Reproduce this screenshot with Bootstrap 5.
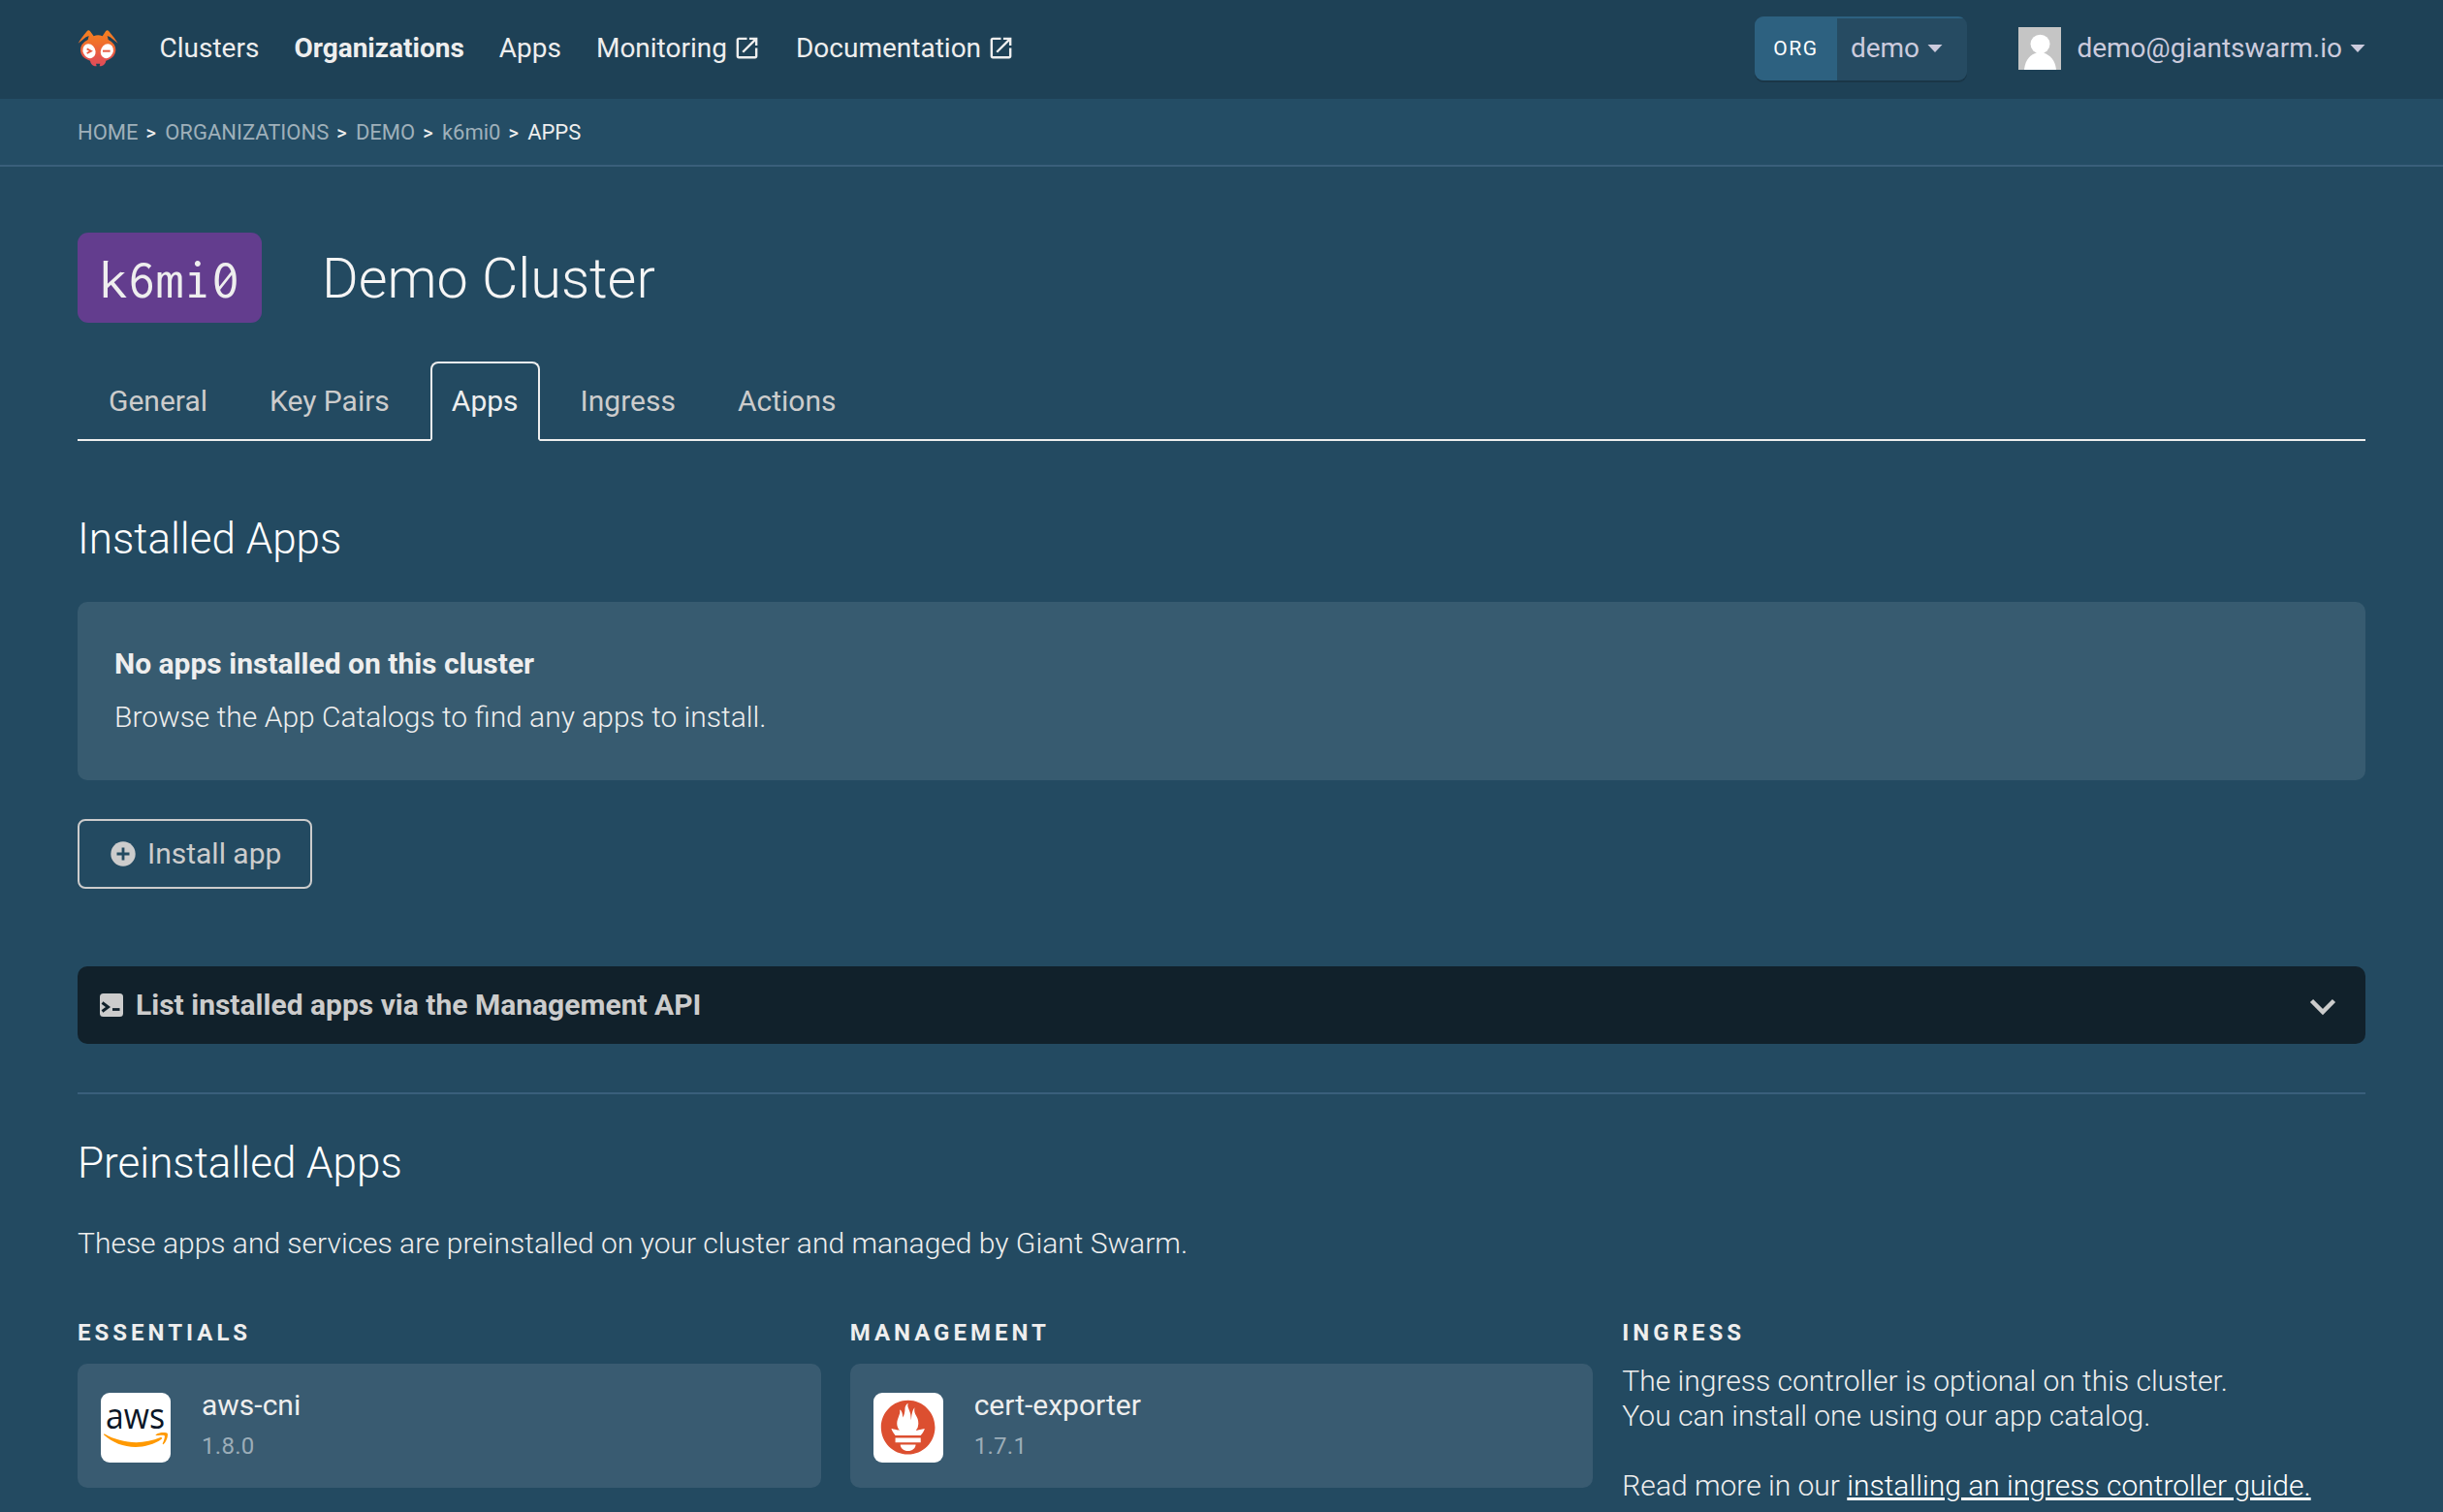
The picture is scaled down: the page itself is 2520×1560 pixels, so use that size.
<!DOCTYPE html>
<html lang="en">
<head>
<meta charset="utf-8">
<meta name="viewport" content="width=device-width, initial-scale=1">
<title>Demo Cluster | Apps</title>
<link href="https://cdn.jsdelivr.net/npm/bootstrap@5.3.0/dist/css/bootstrap.min.css" rel="stylesheet">
<style>
  body { background: #234a61; color: #eee; font-family: Roboto, "Liberation Sans", sans-serif; font-size: 30px; font-weight: 300; line-height: 36px; overflow: hidden; height: 1560px; }
  a { color: inherit; text-decoration: none; }
  svg { display: block; flex: none; }
  .gutter { padding-left: 80px; padding-right: 80px; }
  .topbar { height: 102px; padding-top: 0; padding-bottom: 3px; background: #1e4156; font-size: 28px; font-weight: 400; }
  .topbar .navbar-nav { gap: 36px; margin-left: 40.5px; }
  .topbar .navbar-nav .nav-link { padding: 0; color: #eee; line-height: 34px; }
  .topbar .navbar-nav .nav-link.active { color: #eee; font-weight: 700; }
  .topbar .nav-link svg { margin-left: 6px; }
  .org-picker { width: 219px; height: 66px; border-radius: 9px; overflow: hidden; background: #264b62; color: #cccbdd; }
  .org-wrap { border-radius: 9px; box-shadow: 0 2px 0 #1a3647; margin-right: 53px; }
  .org-label { width: 85px; background: #2d6180; color: #fff; font-size: 21px; letter-spacing: 1.5px; }
  .org-name { border-top: 2px solid #2d6180; padding-left: 14px; padding-bottom: 1px; }
  .user-menu { color: #cccbdd; }
  .user-name { margin: 0 8px 0 16.500px; }
  .crumbs { height: 70px; padding-top: 2px; background: #244d65; border-bottom: 2px solid #3a5f7b; font-size: 22px; font-weight: 400; line-height: 26px; color: #9fb0ba; --bs-breadcrumb-divider: '>'; }
  .crumbs .breadcrumb { margin: 0; font-size: 22px; }
  .crumbs .breadcrumb-item.active { color: #eee; }
  .crumbs .breadcrumb-item + .breadcrumb-item { padding-left: 0; }
  .crumbs .breadcrumb-item + .breadcrumb-item::before { color: #eee; font-size: 20px; font-weight: 500; width: 27.700px; padding: 0 0 0 8px; }
  main { padding-top: 68px; }
  .cluster-id { width: 190px; height: 93px; border-radius: 11px; background: #633d8e; font-family: Inconsolata, "Liberation Mono", monospace; font-size: 57.6px; font-weight: 400; padding-top: 3px; }
  h1 { font-size: 57.6px; font-weight: 300; line-height: 68px; margin: 2px 0 0 62px; color: #f5f5f5; }
  h2 { font-size: 44px; font-weight: 300; line-height: 52px; margin: 0; color: #fff; }
  .tabline { margin-top: 40px; height: 82px; border-bottom: 2px solid #eee; padding-left: 10px; gap: 20px; }
  .tabline .nav-link { height: 82px; padding: 0 20px; border-width: 2px; border-radius: 8px 8px 0 0; color: #ccc; font-weight: 400; display: flex; align-items: center; margin-bottom: -2px; }
  .tabline .nav-link.active { background: #234a61; color: #eee; border-color: #eee #eee #234a61; }
  .sect-installed { margin-top: 75px; }
  .notice { margin-top: 39px; height: 184px; border: 0; border-radius: 10px; background: #375b70; color: #eee; padding: 46px 38px 0; gap: 19px; }
  .install-btn { margin-top: 40px; width: 242px; height: 72px; border: 2px solid #ccc; border-radius: 8px; color: #ccc; font-size: 30px; line-height: 36px; padding: 0 0 0 32px; gap: 12px; }
  .cli-bar { margin-top: 80px; height: 80px; border-radius: 10px; background: #11212b; color: #ccc; padding: 0 30px 0 23px; font-weight: 700; gap: 13px; }
  .cli-bar .chevron { margin: 3px 0 0 auto; }
  .rule { margin: 50px 0 45px; border-top: 2px solid #3a5f7b; opacity: 1; }
  .intro { margin: 39px 0 59px; }
  .app-row { --bs-gutter-x: 30px; }
  .label-caps { font-size: 24px; font-weight: 700; line-height: 30px; letter-spacing: 4px; margin: 0 0 17px; }
  .app-card { height: 128px; border: 0; border-radius: 10px; background: #395b71; color: #eee; padding: 0 24px; gap: 32px; flex-direction: row; }
  .app-logo { width: 72px; height: 72px; border-radius: 9px; background: #fff; margin-top: 30px; overflow: visible; }
  .app-name { margin-top: 25px; font-weight: 400; }
  .app-version { margin-top: 9px; font-size: 24px; line-height: 30px; font-weight: 400; color: #9cadb8; letter-spacing: .3px; }
  .guide { color: #fff; text-decoration: underline; }
</style>
</head>
<body>
<nav class="navbar navbar-expand topbar gutter d-flex align-items-center">
  <a href="#" aria-label="Home"><svg width="44" height="38" viewBox="63 92 132 114">
    <defs><linearGradient id="ant" x1="0" y1="0" x2="0" y2="1"><stop offset="0" stop-color="#f58120"/><stop offset=".35" stop-color="#f0702c"/><stop offset=".75" stop-color="#e5544b"/><stop offset="1" stop-color="#e04d5a"/></linearGradient></defs>
    <path fill="url(#ant)" d="M65 133 Q74 117 92 96 Q97 90 102 96 L113 111 Q126 105 140 111 L150 96 Q155 90 160 96 Q178 117 188 133 Q176 124 164 114 L155 110 L158 122 Q181 133 181 155 Q179 176 158 184 L151 187 Q149 200 136 204 L131 204 L133 196 H120 L122 204 L116 204 Q104 200 102 187 L95 184 Q73 176 72 155 Q72 133 95 122 L98 110 L89 114 Q77 124 65 133Z"/>
    <ellipse cx="99" cy="157" rx="19" ry="23" fill="#fff" transform="rotate(-25 99 157)"/><ellipse cx="154" cy="157" rx="19" ry="23" fill="#fff" transform="rotate(25 154 157)"/>
    <path d="M92 150 L105 157 L92 164" fill="none" stroke="#e65a42" stroke-width="5.5"/><path d="M141 157H164" stroke="#e65a42" stroke-width="6"/>
  </svg></a>
  <ul class="navbar-nav">
    <li class="nav-item"><a class="nav-link" href="#">Clusters</a></li>
    <li class="nav-item"><a class="nav-link active" href="#">Organizations</a></li>
    <li class="nav-item"><a class="nav-link" href="#">Apps</a></li>
    <li class="nav-item"><a class="nav-link d-flex align-items-center" href="#">Monitoring<svg width="29" height="29" viewBox="0 0 24 24" fill="currentColor"><path d="M19 19H5V5h7V3H5c-1.11 0-2 .9-2 2v14c0 1.1.89 2 2 2h14c1.1 0 2-.9 2-2v-7h-2v7zM14 3v2h3.59l-9.83 9.83 1.41 1.41L19 6.41V10h2V3h-7z"/></svg></a></li>
    <li class="nav-item"><a class="nav-link d-flex align-items-center" href="#">Documentation<svg width="29" height="29" viewBox="0 0 24 24" fill="currentColor"><path d="M19 19H5V5h7V3H5c-1.11 0-2 .9-2 2v14c0 1.1.89 2 2 2h14c1.1 0 2-.9 2-2v-7h-2v7zM14 3v2h3.59l-9.83 9.83 1.41 1.41L19 6.41V10h2V3h-7z"/></svg></a></li>
  </ul>
  <div class="d-flex align-items-center ms-auto">
    <div class="org-wrap"><div class="org-picker d-flex">
      <span class="org-label d-flex align-items-center justify-content-center">ORG</span>
      <a class="org-name d-flex align-items-center flex-grow-1" href="#">demo<svg class="ms-2" width="16" height="8" viewBox="0 0 16 8" fill="currentColor"><path d="M.5 0h15L8 8z"/></svg></a>
    </div></div>
    <a class="user-menu d-flex align-items-center" href="#">
      <svg width="44" height="44" viewBox="0 0 44 44"><path fill="#c5c5c5" d="M0 0h44v44H0z"/><ellipse cx="22.5" cy="17.5" rx="10" ry="9.8" fill="#fff"/><path fill="#fff" d="M6 44C7 33 13 28 19 26.500H26C33 29 38 34 39 44Z"/></svg>
      <span class="user-name">demo@giantswarm.io</span><svg width="16" height="8" viewBox="0 0 16 8" fill="currentColor"><path d="M.5 0h15L8 8z"/></svg>
    </a>
  </div>
</nav>
<nav class="crumbs gutter d-flex align-items-center" aria-label="breadcrumb">
  <ol class="breadcrumb">
    <li class="breadcrumb-item"><a href="#">HOME</a></li>
    <li class="breadcrumb-item"><a href="#">ORGANIZATIONS</a></li>
    <li class="breadcrumb-item"><a href="#">DEMO</a></li>
    <li class="breadcrumb-item"><a href="#">k6mi0</a></li>
    <li class="breadcrumb-item active" aria-current="page">APPS</li>
  </ol>
</nav>
<main class="gutter">
  <header class="d-flex align-items-center">
    <span class="cluster-id d-flex align-items-center justify-content-center">k6mi0</span>
    <h1>Demo Cluster</h1>
  </header>
  <ul class="nav nav-tabs tabline">
    <li class="nav-item"><a class="nav-link" href="#">General</a></li>
    <li class="nav-item"><a class="nav-link" href="#">Key Pairs</a></li>
    <li class="nav-item"><a class="nav-link active" href="#">Apps</a></li>
    <li class="nav-item"><a class="nav-link" href="#">Ingress</a></li>
    <li class="nav-item"><a class="nav-link" href="#">Actions</a></li>
  </ul>
  <h2 class="sect-installed">Installed Apps</h2>
  <div class="card notice">
    <div class="fw-bold">No apps installed on this cluster</div>
    <div>Browse the App Catalogs to find any apps to install.</div>
  </div>
  <button type="button" class="btn install-btn d-flex align-items-center"><svg width="26" height="26" viewBox="0 0 26 26"><circle cx="13" cy="13" r="12.700" fill="#ccc"/><path d="M13 6.500v13M6.500 13h13" stroke="#234a61" stroke-width="2.800"/></svg><span>Install app</span></button>
  <div class="cli-bar d-flex align-items-center">
    <svg width="24" height="24" viewBox="0 0 24 24"><rect width="24" height="24" rx="3.500" fill="#ccc"/><path d="M2.500 9.500l6 4.500-6 4.500" fill="none" stroke="#11212b" stroke-width="3"/><path d="M13 16.500h7.500" stroke="#11212b" stroke-width="2.800"/></svg>
    <span>List installed apps via the Management API</span>
    <svg class="chevron" width="28" height="18" viewBox="0 0 28 18"><path d="M2.500 2.500L14 14 25.500 2.500" fill="none" stroke="#ccc" stroke-width="4.500"/></svg>
  </div>
  <hr class="rule">
  <h2>Preinstalled Apps</h2>
  <p class="intro">These apps and services are preinstalled on your cluster and managed by Giant Swarm.</p>
  <div class="row app-row">
    <section class="col-4">
      <h3 class="label-caps">ESSENTIALS</h3>
      <div class="card app-card">
        <svg class="app-logo" viewBox="0 0 72 72"><text x="5" y="36.500" font-family="Open Sans, Noto Sans, sans-serif" font-weight="500" font-size="37" textLength="61" lengthAdjust="spacingAndGlyphs" fill="#0b1626">aws</text><path fill="#f90" transform="translate(3 3.200) scale(2.750)" d="M21.698 16.207c-2.626 1.940-6.442 2.969-9.722 2.969-4.598 0-8.740-1.700-11.870-4.526-.247-.223-.024-.527.272-.351 3.384 1.963 7.559 3.153 11.877 3.153 2.914 0 6.114-.607 9.060-1.852.439-.2.814.287.383.607zM22.792 14.961c-.336-.43-2.220-.207-3.074-.103-.255.032-.295-.192-.063-.36 1.500-1.053 3.967-.75 4.254-.399.287.36-.08 2.826-1.485 4.007-.215.184-.423.088-.327-.151.320-.790 1.030-2.570.695-2.994z"/></svg>
        <div><div class="app-name">aws-cni</div><div class="app-version">1.8.0</div></div>
      </div>
    </section>
    <section class="col-4">
      <h3 class="label-caps">MANAGEMENT</h3>
      <div class="card app-card">
        <svg class="app-logo" viewBox="0 0 72 72"><path fill="#dc4f30" transform="translate(7.800 7.800) scale(2.320)" d="M12 0C5.373 0 0 5.372 0 12c0 6.627 5.373 12 12 12s12-5.373 12-12c0-6.628-5.373-12-12-12zm0 22.460c-1.885 0-3.414-1.260-3.414-2.814h6.828c0 1.553-1.528 2.813-3.414 2.813zm5.640-3.745H6.360v-2.046h11.280v2.046zm-.04-3.098H6.391c-.037-.043-.075-.086-.111-.13-1.155-1.401-1.427-2.133-1.690-2.879-.005-.025 1.400.287 2.395.511 0 0 .513.119 1.262.255-.72-.843-1.147-1.915-1.147-3.010 0-2.406 1.845-4.508 1.180-6.207.648.053 1.340 1.367 1.387 3.422.689-.951.977-2.690.977-3.755 0-1.103.727-2.385 1.454-2.429-.648 1.069.168 1.984.894 4.256.272.854.237 2.290.447 3.201.07-1.892.395-4.652 1.595-5.605-.529 1.200.079 2.702.494 3.424.671 1.164 1.078 2.047 1.078 3.716a4.642 4.642 0 01-1.110 2.996c.792-.149 1.340-.283 1.340-.283l2.573-.502s-.374 1.538-1.810 3.019z"/></svg>
        <div><div class="app-name">cert-exporter</div><div class="app-version">1.7.1</div></div>
      </div>
    </section>
    <section class="col-4">
      <h3 class="label-caps">INGRESS</h3>
      <p>The ingress controller is optional on this cluster.<br>You can install one using our app catalog.<br><br>Read more in our <a class="guide" href="#">installing an ingress controller guide.</a></p>
    </section>
  </div>
</main>
<script src="https://cdn.jsdelivr.net/npm/bootstrap@5.3.0/dist/js/bootstrap.bundle.min.js"></script>
</body>
</html>
